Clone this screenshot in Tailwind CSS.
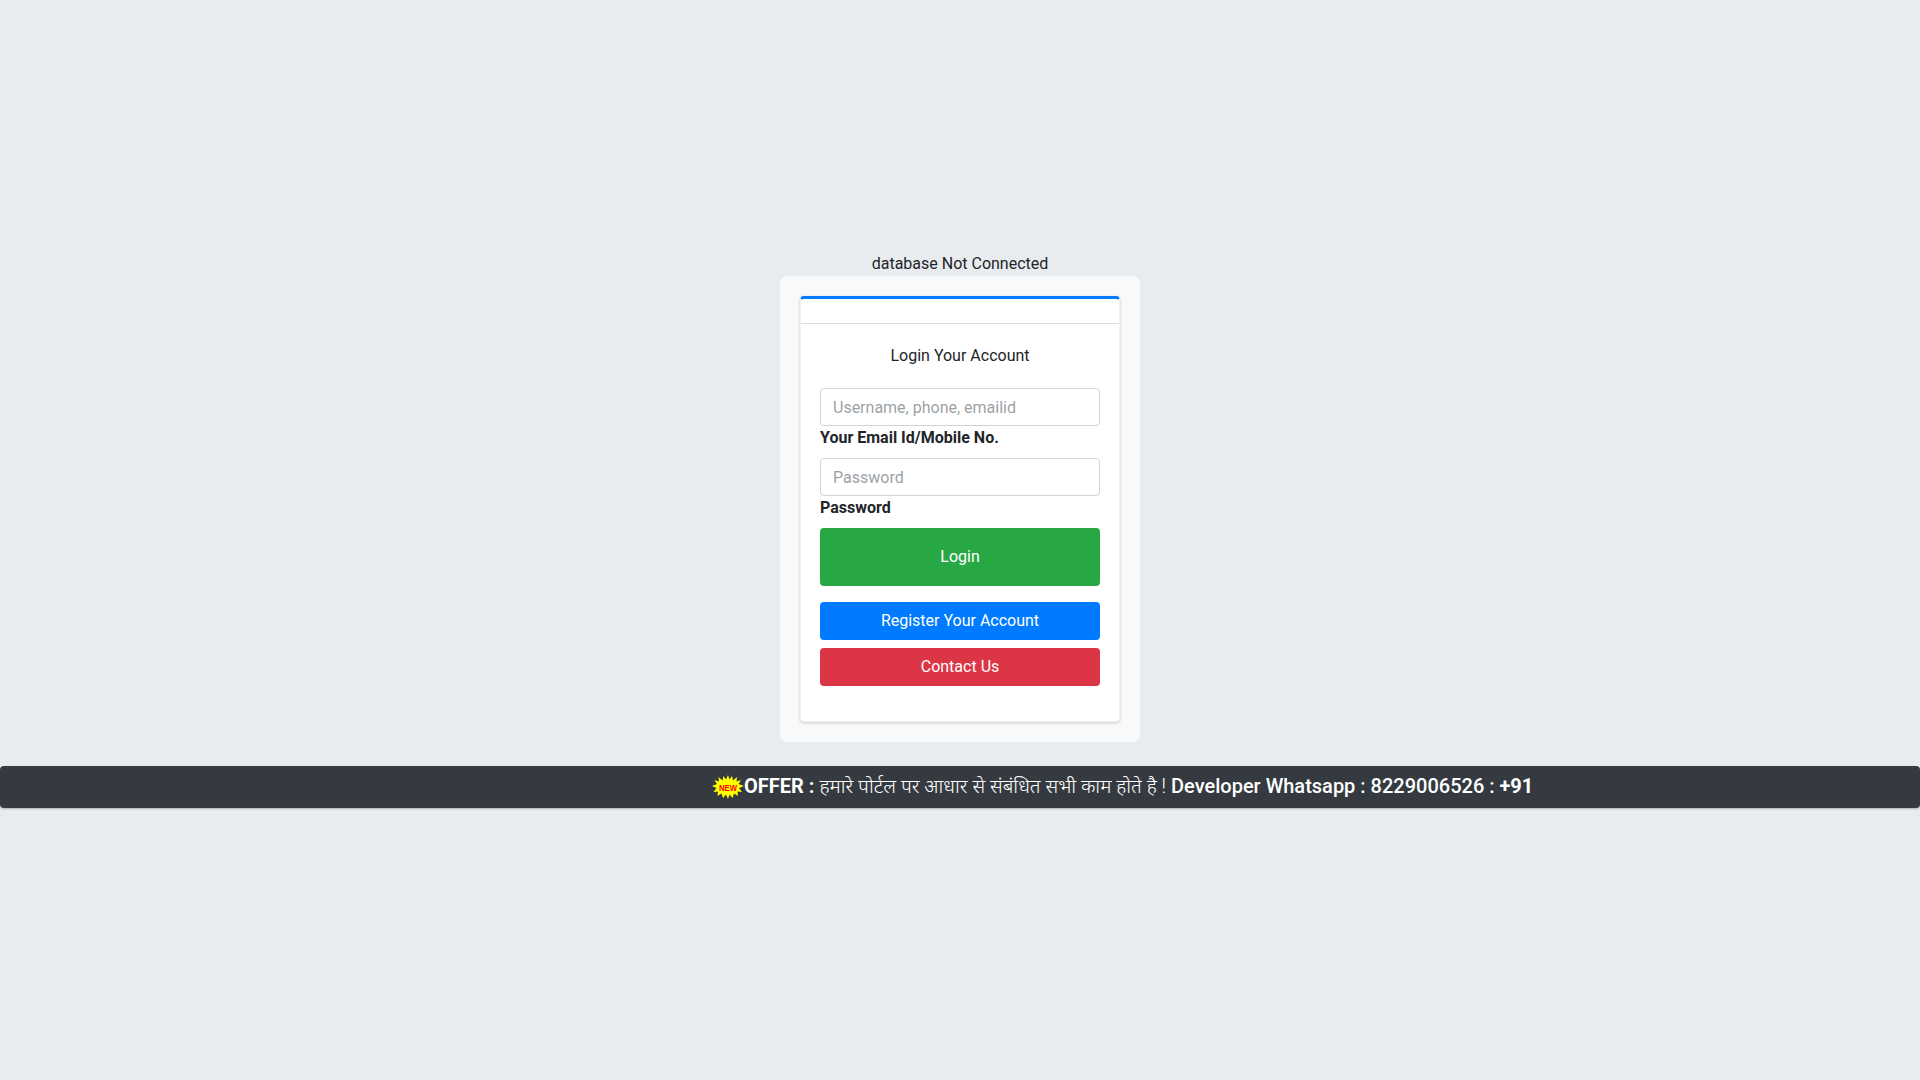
<!DOCTYPE html>
<html lang="en">
<head>
    <meta charset="UTF-8">
    <meta name="viewport" content="width=device-width, initial-scale=1.0">
    <title>Login</title>
    <script src="https://cdn.jsdelivr.net/npm/@tailwindcss/browser@4"></script>
</head>
<body class="bg-[#e9ecef] h-screen overflow-hidden font-['Roboto','Noto_Sans',sans-serif] text-[#212529] text-base leading-6">
    <!-- Login -->
    <div class="w-[360px] mx-auto pt-[252px]">
        <p class="text-center">database Not Connected</p>
        <div class="bg-[#f8f9fa] rounded-lg p-5">
            <div class="bg-white rounded border border-black/5 border-t-[3px] border-t-[#007bff] shadow-[0_1px_3px_rgba(0,0,0,0.2)]">
                <div class="h-[25px] border-b border-[#dcdee0]"></div>
                <div class="px-[19px] pt-5 pb-[35px]">
                    <p class="text-center mb-5">Login Your Account</p>
                    <input type="text" placeholder="Username, phone, emailid" class="block w-full h-[38px] px-3 bg-white border border-[#ced4da] rounded placeholder:text-[#6c757d]/70">
                    <label class="block font-bold mb-2">Your Email Id/Mobile No.</label>
                    <input type="password" placeholder="Password" class="block w-full h-[38px] px-3 bg-white border border-[#ced4da] rounded placeholder:text-[#6c757d]/70">
                    <label class="block font-bold mb-2">Password</label>
                    <button class="block w-full h-[58px] bg-[#28a745] text-white rounded mb-4">Login</button>
                    <a href="#" class="block h-[38px] leading-[38px] text-center bg-[#007bff] text-white rounded mb-2">Register Your Account</a>
                    <a href="#" class="block h-[38px] leading-[38px] text-center bg-[#dc3545] text-white rounded">Contact Us</a>
                </div>
            </div>
        </div>
    </div>

    <!-- Offer bar -->
    <div class="mt-6 h-[42px] bg-[#343a40] rounded-sm shadow-[0_1px_2px_rgba(0,0,0,0.25)] flex items-center pl-[712px] text-white text-xl whitespace-nowrap font-medium">
        <svg width="32" height="24" viewBox="0 0 32 24" class="shrink-0">
            <polygon fill="#ffff00" points="16,0 17.500,4.500 20,1 21,5.500 25,2 24.500,6.500 29,5 26.500,9 32,11 27,13 30,17 25.500,16.500 26,21 22,18.500 20.500,23 17.500,19.500 16,24 14,19.500 11,23 9.500,18.500 5.500,21 6,16.500 1.500,17 4.500,13 0,11 5,9 2.500,5 7,6.500 6.500,2 10.500,5.500 11.500,1 14,4.500"/>
            <text x="7" y="15.500" textLength="18" lengthAdjust="spacingAndGlyphs" fill="#ff0000" font-size="9" font-weight="700" font-family="Liberation Sans, sans-serif">NEW</text>
        </svg>
        <span class="-mt-0.5"><b class="font-bold">OFFER :</b> <span class="font-light text-[19.85px]">हमारे पोर्टल पर आधार से संबंधित सभी काम होते है !</span> Developer Whatsapp : 8229006526 : <b class="font-bold">+91</b></span>
    </div>
</body>
</html>
